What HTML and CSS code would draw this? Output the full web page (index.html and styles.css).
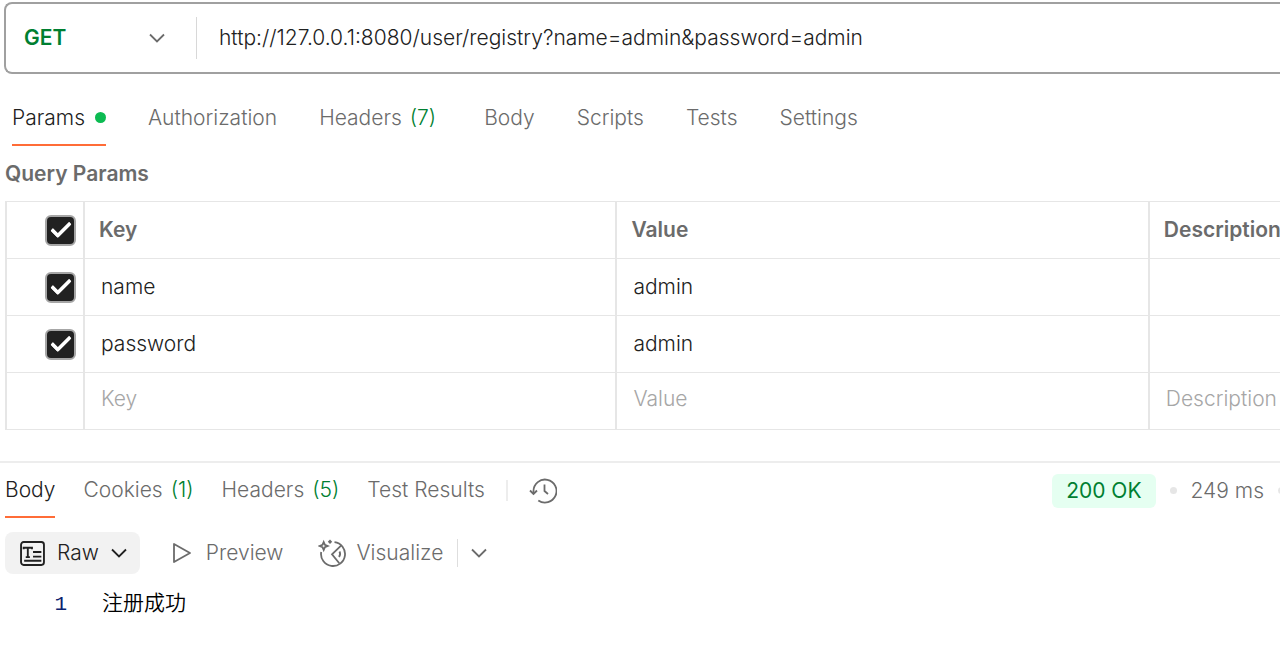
FILE: index.html
```html
<!DOCTYPE html>
<html lang="en">
<head>
    <meta charset="UTF-8">
    <title>Request</title>
    <link rel="stylesheet" href="styles.css">
</head>
<body>
<form class="request-bar">
    <div class="method">
        <select class="method-select" aria-label="Method">
            <option>GET</option>
            <option>POST</option>
            <option>PUT</option>
            <option>DELETE</option>
        </select>
        <svg class="chevron" viewBox="0 0 16 16"><path d="M1 4.5l7 7 7-7"/></svg>
    </div>
    <input class="url" type="text" aria-label="URL" value="http://127.0.0.1:8080/user/registry?name=admin&amp;password=admin">
</form>

<nav class="tabs request-tabs">
    <button class="tab active">Params <span class="dot"></span></button>
    <button class="tab">Authorization</button>
    <button class="tab">Headers <span class="count">(7)</span></button>
    <button class="tab">Body</button>
    <button class="tab">Scripts</button>
    <button class="tab">Tests</button>
    <button class="tab">Settings</button>
</nav>

<section class="params">
    <h2 class="params-title">Query Params</h2>
    <table class="params-table">
        <thead>
        <tr>
            <th class="check-cell"><input class="check" type="checkbox" aria-label="Select all" checked></th>
            <th>Key</th>
            <th>Value</th>
            <th>Description</th>
        </tr>
        </thead>
        <tbody>
        <tr>
            <td class="check-cell"><input class="check" type="checkbox" aria-label="Use name" checked></td>
            <td><input class="cell" type="text" aria-label="Key" value="name"></td>
            <td><input class="cell" type="text" aria-label="Value" value="admin"></td>
            <td><input class="cell" type="text" aria-label="Description"></td>
        </tr>
        <tr>
            <td class="check-cell"><input class="check" type="checkbox" aria-label="Use password" checked></td>
            <td><input class="cell" type="text" aria-label="Key" value="password"></td>
            <td><input class="cell" type="text" aria-label="Value" value="admin"></td>
            <td><input class="cell" type="text" aria-label="Description"></td>
        </tr>
        <tr class="new-row">
            <td class="check-cell"></td>
            <td><input class="cell" type="text" aria-label="Key" placeholder="Key"></td>
            <td><input class="cell" type="text" aria-label="Value" placeholder="Value"></td>
            <td><input class="cell" type="text" aria-label="Description" placeholder="Description"></td>
        </tr>
        </tbody>
    </table>
</section>

<section class="response">
    <div class="response-head">
        <nav class="tabs response-tabs">
            <button class="tab active">Body</button>
            <button class="tab">Cookies <span class="count">(1)</span></button>
            <button class="tab">Headers <span class="count">(5)</span></button>
            <button class="tab">Test Results</button>
        </nav>
        <button class="history" aria-label="History">
            <svg class="icon-history" viewBox="0 0 28 26">
                <path d="M4.500 16V13A11.500 11.500 0 1 1 9.300 22.400"/>
                <path d="M1 12.500l3.500 3.500 3.500-3.500M15.500 6.500v6.500l3.500 3"/>
            </svg>
        </button>
        <div class="status">
            <span class="status-code">200 OK</span>
            <span class="sep"></span>
            <span>249 ms</span>
            <span class="sep last"></span>
        </div>
    </div>

    <div class="view-bar">
        <button class="view raw">
            <svg class="icon-raw" viewBox="0 0 24 24">
                <rect x="1" y="1" width="22" height="22" rx="2.500"/>
                <path d="M3.500 8V6.500h8V8M7.500 6.500v9M5.500 15.500h4M12.500 10.500h8M12.500 15h8M4 19h16.500"/>
            </svg>
            Raw
            <svg class="chevron" viewBox="0 0 16 16"><path d="M1 4.5l7 7 7-7"/></svg>
        </button>
        <button class="view preview">
            <svg class="icon-play" viewBox="0 0 20 20"><path d="M2 1v18l16-9z"/></svg>
            Preview
        </button>
        <button class="view visualize">
            <svg class="icon-visualize" viewBox="0 0 28 28">
                <path d="M3.200 13A12 12 0 1 0 16.500 3.100"/>
                <path d="M23.300 6.300L14 15.300l7.300 9M21.500 12.500q1.500 3-.500 5.500"/>
                <path d="M5.700 3l1.200 2.800 2.800 1.200-2.800 1.200-1.200 2.800-1.200-2.800-2.800-1.200 2.800-1.200z"/>
                <path class="solid" d="M12 .5l2.200 2.200-2.200 2.200-2.200-2.200z"/>
            </svg>
            Visualize
        </button>
        <button class="more" aria-label="More views">
            <svg class="chevron" viewBox="0 0 16 16"><path d="M1 4.5l7 7 7-7"/></svg>
        </button>
    </div>

    <div class="code">
        <span class="line-no">1</span>
        <span class="line" lang="zh">注册成功</span>
    </div>
</section>
</body>
</html>
```
FILE: styles.css
```css
*, *::before{
    box-sizing: border-box;
}
body{
    margin: 0;
    padding-top: 2px;
    background: #fff;
    color: #212121;
    font: 350 21px/26px Inter, "Noto Sans CJK SC", sans-serif;
}
button, input, select{
    margin: 0;
    padding: 0;
    border: 0;
    background: none;
    color: inherit;
    font: inherit;
}
svg{
    flex: none;
    fill: none;
    stroke: currentColor;
    stroke-width: 1.800;
}

/* request line */
.request-bar{
    display: flex;
    align-items: center;
    height: 72px;
    margin-left: 4px;
    border: 2px solid #a0a0a0;
    border-right: 0;
    border-radius: 8px 0 0 8px;
}
.method{
    display: flex;
    align-items: center;
    width: 191px;
    height: 42px;
    padding-right: 31px;
    border-right: 1px solid #d8d8d8;
    color: #6b6b6b;
}
.method-select{
    flex: 1;
    padding-left: 18px;
    appearance: none;
    color: #007f31;
    font-weight: 600;
}
.chevron{
    width: 16px;
    height: 16px;
}
.url{
    flex: 1;
    padding-left: 22px;
}

/* tabs */
.tabs{
    display: flex;
}
.tab{
    display: flex;
    align-items: center;
    gap: 8px;
    color: #6b6b6b;
    border-bottom: 2px solid transparent;
    white-space: nowrap;
}
.tab.active{
    color: #212121;
    border-color: #ff6c37;
}
.count{
    color: #007f31;
}
.dot{
    width: 11px;
    height: 11px;
    margin-left: 2px;
    border-radius: 50%;
    background: #0cbb52;
}
.request-tabs{
    gap: 42px;
    height: 55px;
    margin-top: 17px;
    padding-left: 12px;
}
.request-tabs .count{
    margin-right: 6px;
}

/* params table */
.params{
    padding-left: 5px;
    overflow: hidden;
}
.params-title{
    margin: 0;
    padding: 15px 0 14px;
    color: #6b6b6b;
    font-size: 21px;
    font-weight: 600;
}
.params-table{
    width: calc(131% + 7px);
    table-layout: fixed;
    border-collapse: collapse;
}
.params-table th, .params-table td{
    height: 57px;
    padding: 0 14px;
    border: 1px solid #e6e6e6;
    border-width: 1px 2px;
    color: #6b6b6b;
    font-weight: 600;
    text-align: left;
}
.params-table .check-cell{
    width: 78px;
    padding: 0 7px 0 0;
    text-align: right;
}
.check{
    display: inline-grid;
    place-items: center;
    width: 31px;
    height: 31px;
    border: 2px solid #a6a6a6;
    border-radius: 6px;
    appearance: none;
    vertical-align: middle;
}
.check:checked{
    background: #212121;
}
.check:checked::before{
    content: "";
    width: 20px;
    height: 11px;
    margin-bottom: 6px;
    border: solid #fff;
    border-width: 0 0 4px 4px;
    border-radius: 2px;
    transform: rotate(-45deg);
}
.cell{
    width: 100%;
    padding-left: 2px;
    color: #212121;
    font-weight: 350;
}
.cell::placeholder{
    color: #a6a6a6;
}
.new-row .cell{
    margin-bottom: 5px;
}

/* response */
.response{
    margin-top: 31px;
    border-top: 2px solid #ededed;
    color: #6b6b6b;
}
.response-head{
    display: flex;
    align-items: center;
    height: 55px;
    padding-left: 5px;
    overflow: hidden;
}
.response-tabs{
    align-self: stretch;
    gap: 28px;
}
.history{
    height: 21px;
    margin-left: 21px;
    padding-left: 21px;
    border-left: 2px solid #ededed;
    display: flex;
    align-items: center;
    color: #6b6b6b;
}
.icon-history{
    width: 28px;
    height: 26px;
}
.status{
    display: flex;
    align-items: center;
    gap: 14px;
    margin-left: auto;
    white-space: nowrap;
}
.status-code{
    padding: 4px 14px;
    border-radius: 6px;
    background: #e5fff1;
    color: #007f31;
    font-weight: 400;
}
.sep{
    width: 7px;
    height: 7px;
    border-radius: 50%;
    background: #e6e6e6;
}
.sep.last{
    margin-right: -5px;
}

.view-bar{
    display: flex;
    align-items: center;
    margin-top: 14px;
    padding-left: 5px;
}
.view{
    display: flex;
    align-items: center;
    gap: 12px;
    height: 42px;
}
.raw{
    padding: 0 13px 0 15px;
    border-radius: 8px;
    background: #f2f2f2;
    color: #212121;
}
.icon-raw{
    width: 25px;
    height: 25px;
}
.preview{
    gap: 14px;
    margin-left: 32px;
}
.icon-play{
    width: 20px;
    height: 20px;
    stroke-linejoin: round;
}
.visualize{
    gap: 10px;
    margin-left: 35px;
}
.icon-visualize{
    width: 28px;
    height: 28px;
}
.solid{
    fill: currentColor;
    stroke: none;
}
.more{
    display: flex;
    align-items: center;
    height: 28px;
    margin-left: 14px;
    padding-left: 13px;
    border-left: 1px solid #dedede;
}

.code{
    display: flex;
    align-items: baseline;
    padding-top: 14px;
    color: #000;
}
.line-no{
    width: 67px;
    color: #0b216f;
    font-family: "Liberation Mono", monospace;
    text-align: right;
}
.line{
    padding-left: 35px;
    font-family: "Noto Sans CJK SC", sans-serif;
}
```
